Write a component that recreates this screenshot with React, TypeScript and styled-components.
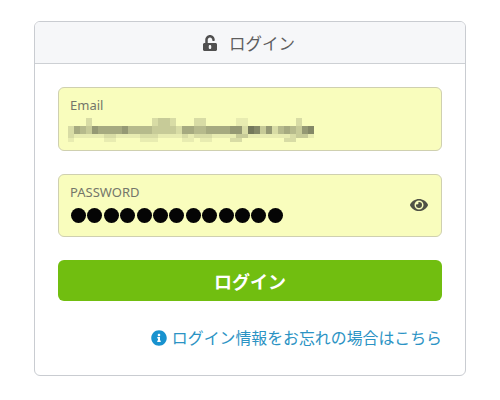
import styled, { createGlobalStyle } from "styled-components";
import { FaUnlockAlt, FaEye, FaInfoCircle } from "react-icons/fa";

const GlobalStyle = createGlobalStyle`
  html, body {
    margin: 0;
    padding: 0;
    background: #fff;
    font-family: "Noto Sans", "Noto Sans CJK JP", sans-serif;
  }
`;

const Page = styled.div`
  width: 500px;
  height: 400px;
  padding: 21px 34px 0;
  box-sizing: border-box;
`;

const Card = styled.section`
  height: 355px;
  box-sizing: border-box;
  border: 1px solid #c9ccd1;
  border-radius: 6px;
  overflow: hidden;
`;

const CardHeader = styled.header`
  height: 42px;
  box-sizing: border-box;
  padding-right: 3px;
  background: #f6f7f9;
  border-bottom: 1px solid #cdd0d4;
  display: flex;
  align-items: center;
  justify-content: center;
  gap: 11px;
  color: #5e5e5e;
  font-size: 16.5px;
  svg {
    width: 16px;
    height: 16px;
    color: #505050;
  }
`;

const CardBody = styled.div`
  padding: 23px 23px 0;
  display: flex;
  flex-direction: column;
`;

const Field = styled.div`
  position: relative;
  height: 63.5px;
  box-sizing: border-box;
  margin-bottom: 23px;
  padding: 8px 11px 0;
  background: #f9fdbd;
  border: 1px solid #cfd0b0;
  border-radius: 6px;
`;

const FieldLabel = styled.div`
  font-size: 13px;
  line-height: 18px;
  color: #74766a;
`;

const Blur = styled.div`
  margin: 4px 0 0 -2px;
  width: 246px;
  height: 24px;
  display: grid;
  grid-template-columns: repeat(41, 6px);
  grid-auto-rows: 4px;
`;

const Dots = styled.div`
  margin: 7px 0 0 1px;
  display: flex;
`;

const Dot = styled.span`
  width: 15px;
  height: 15px;
  margin-right: 1.4px;
  border-radius: 50%;
  background: #050505;
`;

const EyeButton = styled.span`
  position: absolute;
  right: 13px;
  top: 21px;
  display: flex;
  color: #4f5145;
  svg {
    width: 18px;
    height: 18px;
  }
`;

const SubmitButton = styled.button`
  height: 41px;
  border: none;
  border-radius: 6px;
  background: #71be10;
  color: #fff;
  font-family: inherit;
  font-size: 18px;
  font-weight: 700;
`;

const HelpLink = styled.a`
  margin-top: 27px;
  display: flex;
  align-items: center;
  justify-content: flex-end;
  gap: 5px;
  color: #2b93c4;
  font-size: 15.9px;
  line-height: 20px;
  svg {
    width: 16px;
    height: 16px;
    color: #1892cf;
  }
`;

// rough mosaic of the hidden address: 0 = field colour, 9 = darkest
const topRow = "00020000000000233200022000001100000000200";
const bandRow = "25436555564444333325544555566287362454367";
const mosaic = [
  topRow,
  topRow,
  bandRow,
  bandRow,
  "21111122111122211112122211113311111112331",
  "10000011000011100001101100022000000022000",
];

const shade = (v: string) => {
  const n = Number(v) / 9;
  const r = Math.round(249 - n * 150);
  const g = Math.round(253 - n * 150);
  const b = Math.round(189 - n * 110);
  return `rgb(${r},${g},${b})`;
};

export default function App() {
  return (
    <Page>
      <GlobalStyle />
      <Card>
        <CardHeader>
          <FaUnlockAlt />
          <span>ログイン</span>
        </CardHeader>
        <CardBody>
          <Field>
            <FieldLabel>Email</FieldLabel>
            <Blur>
              {mosaic.flatMap((row, y) =>
                row.split("").map((v, x) => (
                  <span key={`${x}-${y}`} style={{ background: shade(v) }} />
                ))
              )}
            </Blur>
          </Field>
          <Field>
            <FieldLabel>PASSWORD</FieldLabel>
            <Dots>
              {Array.from({ length: 13 }, (_, i) => (
                <Dot key={i} />
              ))}
            </Dots>
            <EyeButton>
              <FaEye />
            </EyeButton>
          </Field>
          <SubmitButton>ログイン</SubmitButton>
          <HelpLink>
            <FaInfoCircle />
            ログイン情報をお忘れの場合はこちら
          </HelpLink>
        </CardBody>
      </Card>
    </Page>
  );
}
